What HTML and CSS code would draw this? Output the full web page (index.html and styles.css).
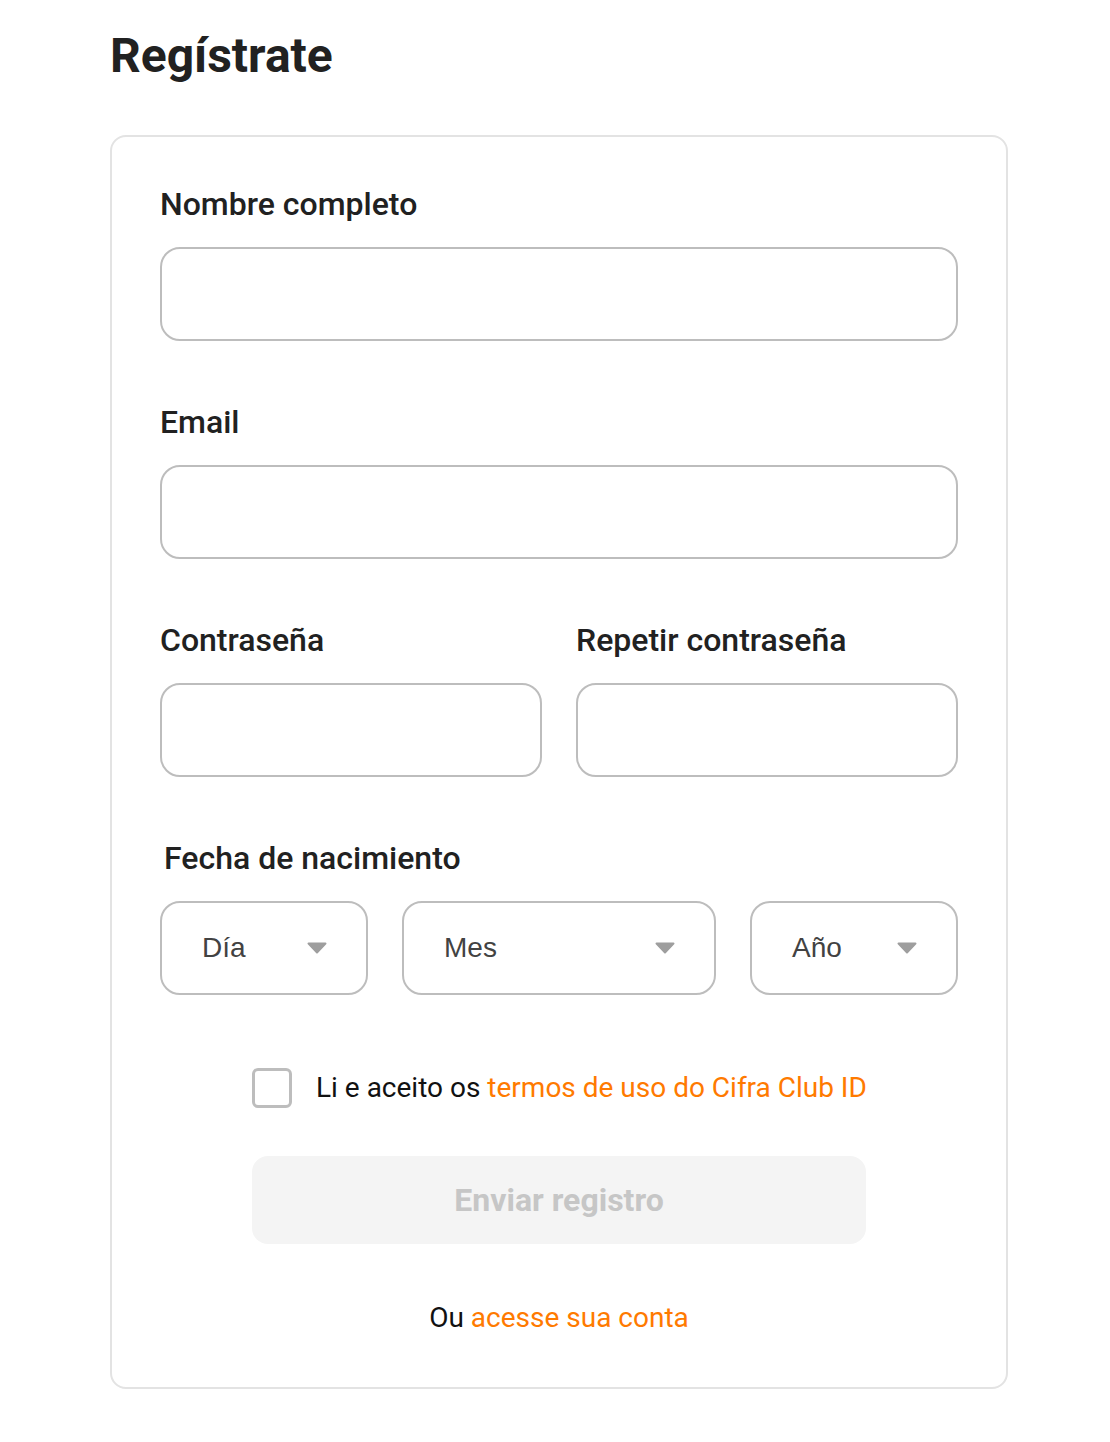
FILE: index.html
```html
<!DOCTYPE html>
<html lang="es">
<head>
  <meta charset="UTF-8">
  <meta name="viewport" content="width=device-width, initial-scale=1.0">
  <title>Regístrate</title>
  <link rel="stylesheet" href="styles.css">
</head>
<body>
  <div class="page">
    <h1 class="page-title">Regístrate</h1>

    <form class="signup-card">
      <div class="field">
        <label class="field-label" for="name">Nombre completo</label>
        <input class="field-input" id="name" type="text">
      </div>

      <div class="field">
        <label class="field-label" for="email">Email</label>
        <input class="field-input" id="email" type="email">
      </div>

      <div class="field-row">
        <div class="field">
          <label class="field-label" for="pass">Contraseña</label>
          <input class="field-input" id="pass" type="password">
        </div>
        <div class="field">
          <label class="field-label" for="pass2">Repetir contraseña</label>
          <input class="field-input" id="pass2" type="password">
        </div>
      </div>

      <div class="field">
        <span class="field-label field-label--date">Fecha de nacimiento</span>
        <div class="date-row">
          <div class="select-box select-box--day">
            <span>Día</span>
            <svg class="select-arrow" width="20" height="12" viewBox="0 0 20 12"><path d="M1.5 0.5h17a1 1 0 0 1 .7 1.7l-8.5 9a1 1 0 0 1-1.4 0l-8.5-9A1 1 0 0 1 1.5 0.5z" fill="#9e9e9e"/></svg>
          </div>
          <div class="select-box select-box--month">
            <span>Mes</span>
            <svg class="select-arrow" width="20" height="12" viewBox="0 0 20 12"><path d="M1.5 0.5h17a1 1 0 0 1 .7 1.7l-8.5 9a1 1 0 0 1-1.4 0l-8.5-9A1 1 0 0 1 1.5 0.5z" fill="#9e9e9e"/></svg>
          </div>
          <div class="select-box select-box--year">
            <span>Año</span>
            <svg class="select-arrow" width="20" height="12" viewBox="0 0 20 12"><path d="M1.5 0.5h17a1 1 0 0 1 .7 1.7l-8.5 9a1 1 0 0 1-1.4 0l-8.5-9A1 1 0 0 1 1.5 0.5z" fill="#9e9e9e"/></svg>
          </div>
        </div>
      </div>

      <div class="signup-footer">
        <label class="terms">
          <span class="checkbox"></span>
          <span>Li e aceito os <a href="#" class="link">termos de uso do Cifra Club ID</a></span>
        </label>

        <button type="button" class="submit-btn" disabled>Enviar registro</button>

        <p class="login-hint">Ou <a href="#" class="link">acesse sua conta</a></p>
      </div>
    </form>
  </div>
</body>
</html>
```

FILE: styles.css
```css
body {
  margin: 0;
  font-family: Roboto, "Liberation Sans", Arial, sans-serif;
  background: #fff;
  color: #212121;
}

.page {
  width: 898px;
  padding: 28px 0 52px 110px;
}

.page-title {
  margin: 0 0 51px;
  font-size: 48px;
  line-height: 56px;
  font-weight: 700;
  color: #212121;
}

/* tarjeta del formulario */
.signup-card {
  border: 2px solid #e3e3e3;
  border-radius: 16px;
  padding: 49px 48px 0;
  display: flex;
  flex-direction: column;
  gap: 63px;
}

.field {
  display: flex;
  flex-direction: column;
  flex: 1;
  min-width: 0;
}

.field-label {
  font-size: 32px;
  line-height: 36px;
  font-weight: 500;
  color: #212121;
  margin-bottom: 25px;
}

.field-label--date {
  padding-left: 4px;
}

.field-input {
  box-sizing: border-box;
  width: 100%;
  height: 94px;
  border: 2px solid #bdbdbd;
  border-radius: 20px;
  padding: 0 24px;
  font-size: 28px;
  font-family: inherit;
  outline: none;
}

.field-row {
  display: flex;
  gap: 34px;
}

.date-row {
  display: flex;
  gap: 34px;
}

.select-box {
  box-sizing: border-box;
  height: 94px;
  border: 2px solid #bdbdbd;
  border-radius: 20px;
  padding: 0 39px 0 40px;
  display: flex;
  align-items: center;
  justify-content: space-between;
  font-family: "Liberation Sans", Arial, sans-serif;
  font-size: 28px;
  color: #424242;
}

.select-box--day,
.select-box--year {
  width: 208px;
}

.select-box--month {
  flex: 1;
}

.select-arrow {
  display: block;
}

.signup-footer {
  width: 614px;
  align-self: center;
  margin-top: 10px;
  display: flex;
  flex-direction: column;
}

.terms {
  display: flex;
  align-items: center;
  gap: 24px;
  font-size: 28px;
  line-height: 40px;
  color: #111;
  white-space: nowrap;
}

.checkbox {
  box-sizing: border-box;
  width: 40px;
  height: 40px;
  border: 3px solid #bdbdbd;
  border-radius: 6px;
  flex: none;
}

.link {
  color: #ff7a00;
  text-decoration: none;
}

.submit-btn {
  margin-top: 48px;
  height: 88px;
  border: none;
  border-radius: 16px;
  background: #f4f4f4;
  color: #c6c6c6;
  font-family: inherit;
  font-size: 32px;
  font-weight: 700;
}

.login-hint {
  margin: 58px 0 53px;
  text-align: center;
  font-size: 28px;
  line-height: 32px;
  color: #111;
}
```
